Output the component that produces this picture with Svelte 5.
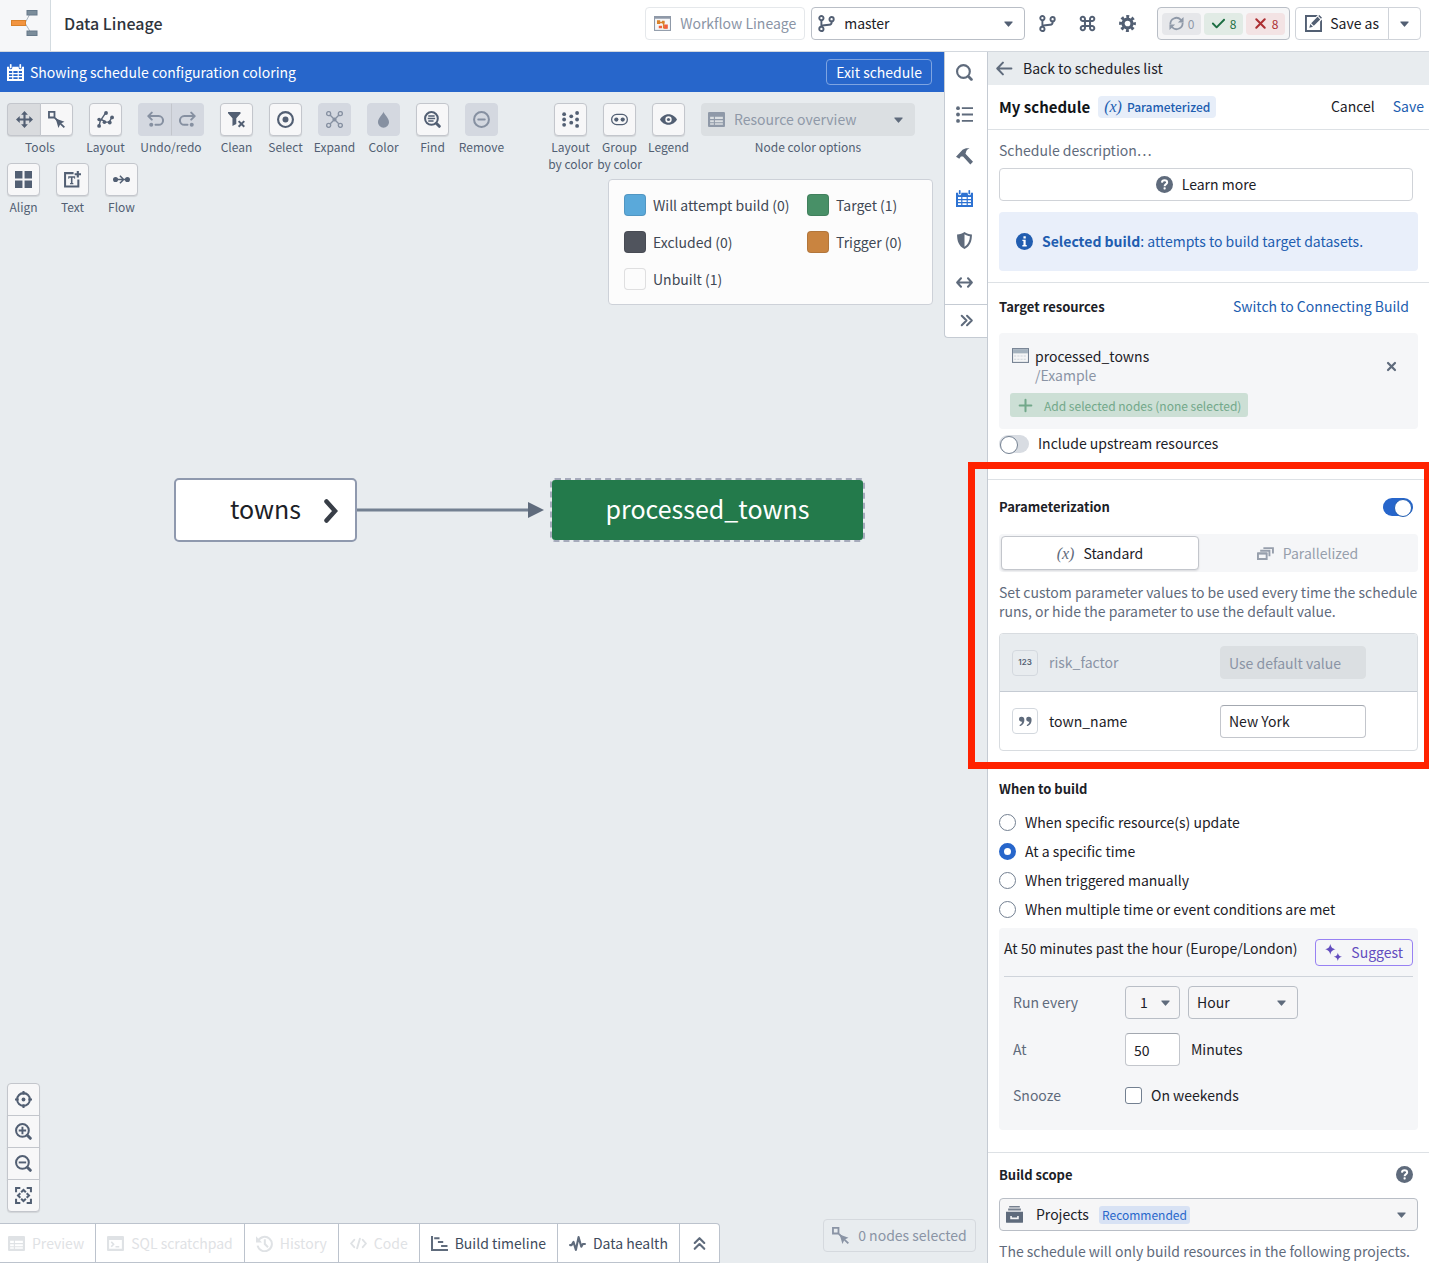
<script>
  const icons = {
    caret: `<path d="M12 6.500c0-.28-.22-.5-.5-.5h-7a.5.5 0 0 0-.37.83l3.500 4a.5.5 0 0 0 .74 0l3.500-4a.5.5 0 0 0 .13-.33z"/>`,
    branch: `<g fill="none" stroke="currentColor" stroke-width="1.8"><circle cx="3.2" cy="2.9" r="2"/><circle cx="3.2" cy="13.1" r="2"/><circle cx="12.8" cy="3.9" r="2"/><path d="M3.2 4.900V11.100M12.800 6v1c0 1.500-.8 2-2.300 2.200L6 9.700c-1.700.2-2.800.6-2.800 1.600"/></g>`,
    command: `<path fill="none" stroke="currentColor" stroke-width="1.900" d="M5.600 5.600h4.800v4.800H5.600zM5.600 5.600H3.900a2 2 0 1 1 1.700-1.900zM10.400 5.600h1.700a2 2 0 1 0-1.700-1.900zM5.600 10.400H3.900a2 2 0 1 0 1.700 1.900zM10.400 10.400h1.700a2 2 0 1 1-1.700 1.900z"/>`,
    cog: `<g fill="none" stroke="currentColor"><circle cx="8" cy="8" r="4.200" stroke-width="3"/><circle cx="8" cy="8" r="6.400" stroke-width="3" stroke-dasharray="2.700 2.327" stroke-dashoffset="1.350"/></g>`,
    refresh: `<path fill="none" stroke="currentColor" stroke-width="1.900" d="M1.500 9a6.500 6.500 0 0 1 11-5.200L14.500 6M14.500 7a6.500 6.500 0 0 1-11 5.200L1.500 10"/><path d="M15.500 1v6h-6zM.5 15V9h6z"/>`,
    tick: `<path d="M14 3c-.28 0-.53.11-.71.29L6 10.590l-3.290-3.300a1 1 0 0 0-1.420 1.420l4 4a1 1 0 0 0 1.420 0l8-8A1 1 0 0 0 14 3z"/>`,
    cross: `<path fill="none" stroke="currentColor" stroke-width="2.200" stroke-linecap="round" d="M3.500 3.500l9 9m0-9l-9 9"/>`,
    smallCross: `<path fill="none" stroke="currentColor" stroke-width="2.400" stroke-linecap="round" d="M4.300 4.300l7.400 7.400m0-7.400l-7.400 7.400"/>`,
    edit: `<path d="M0 0h12l-1.800 1.800H1.800v12.400h12.400V6L16 4.200V16H0z"/><path d="M4 12l1-3.500L7.500 11zM5.800 7.700l6-6 2.500 2.500-6 6zM12.500 1l1-1L16 2.500l-1 1z"/>`,
    calendar: `<path fill-rule="evenodd" d="M0 2.500h2V3.500a1.500 1.500 0 0 0 3 0v-1h6v1a1.500 1.500 0 0 0 3 0v-1h2V16H0zM1.900 6.500v2h3v-2zm4.100 0v2h4v-2zm5.100 0v2h3v-2zM1.900 9.600v1.800h3V9.600zm4.100 0v1.800h4V9.600zm5.100 0v1.800h3V9.600zM1.900 12.500v1.700h3v-1.700zm4.100 0v1.700h4v-1.700zm5.100 0v1.700h3v-1.700z"/><rect x="2.700" y="0" width="1.600" height="4" rx=".8"/><rect x="11.700" y="0" width="1.600" height="4" rx=".8"/>`,
    move: `<path d="M8 0l3.200 3.500H9v3.500h3.500V4.800L16 8l-3.500 3.200V9H9v3.500h2.200L8 16l-3.200-3.500H7V9H3.500v2.200L0 8l3.500-3.200V7H7V3.500H4.800z"/>`,
    selectNode: `<path fill="none" stroke="currentColor" stroke-width="1.700" d="M.9.900h5.200v5.200H.9zM5.500 5.500l4 4"/><path d="M7.200 7l8.300 3.200-3 1.400 3.500 3.300-1.200 1.100-3.400-3.400L9.800 16z"/>`,
    graph: `<path fill="none" stroke="currentColor" stroke-width="1.300" d="M2 14l1-4.500 5-7.500M3 8.500h2l3.500 2h3L14 6"/><circle cx="2" cy="14" r="1.800"/><circle cx="2" cy="8" r="1.700"/><circle cx="8.500" cy="1.900" r="1.800"/><circle cx="7" cy="10.500" r="1.700"/><circle cx="12" cy="10.800" r="1.800"/><circle cx="14.200" cy="6" r="1.800"/>`,
    undo: `<path fill="none" stroke="currentColor" stroke-width="1.900" stroke-linecap="round" stroke-linejoin="round" d="M4.500 1.500L1.200 4.800l3.300 3.300M1.700 4.800h9.300a4.100 4.100 0 0 1 0 8.200H8"/><circle cx="4" cy="13" r="1.900"/>`,
    redo: `<path fill="none" stroke="currentColor" stroke-width="1.900" stroke-linecap="round" stroke-linejoin="round" d="M11.500 1.500l3.300 3.300-3.300 3.300M14.300 4.800H5a4.100 4.100 0 0 0 0 8.200h3"/><circle cx="12" cy="13" r="1.900"/>`,
    filterRemove: `<path d="M0 1h11.500L12 2 7.800 6.800v5.400L4.200 14V6.800L0 2z"/><path fill="none" stroke="currentColor" stroke-width="1.900" d="M10 9.500l5.300 5.300m0-5.300L10 14.800"/>`,
    selection: `<circle cx="8" cy="8" r="7" fill="none" stroke="currentColor" stroke-width="2"/><circle cx="8" cy="8" r="2.800"/>`,
    expand: `<g fill="none" stroke="currentColor" stroke-width="1.300"><circle cx="2.500" cy="2.500" r="1.900"/><circle cx="13.500" cy="2.500" r="1.900"/><circle cx="2.500" cy="13.500" r="1.900"/><circle cx="13.500" cy="13.500" r="1.900"/><path d="M4 4l8 8m0-8l-8 8"/></g><circle cx="8" cy="8" r="1.900"/>`,
    tint: `<path d="M8 .5c0 2-5.200 6-5.200 10a5.200 5.200 0 0 0 10.400 0C13.200 6.500 8 2.500 8 .5z"/>`,
    searchText: `<circle cx="7" cy="7" r="6" fill="none" stroke="currentColor" stroke-width="1.900"/><path fill="none" stroke="currentColor" stroke-width="2.800" stroke-linecap="round" d="M11.800 11.800l2.600 2.600"/><path d="M4 4h6v1.400H4zM3.500 6.400h7v1.400h-7zM4 8.800h5v1.400H4z"/>`,
    remove: `<circle cx="8" cy="8" r="7" fill="none" stroke="currentColor" stroke-width="1.900"/><rect x="4" y="7" width="8" height="2" rx="1"/>`,
    layoutGrid: `<circle cx="2" cy="3" r="1.800"/><circle cx="2" cy="8" r="1.800"/><circle cx="2" cy="13" r="1.800"/><circle cx="8.700" cy="5" r="1.800"/><circle cx="8.700" cy="11" r="1.800"/><circle cx="14.200" cy="1.900" r="1.800"/><circle cx="14.200" cy="8" r="1.800"/><circle cx="14.200" cy="14" r="1.800"/>`,
    group: `<rect x=".6" y="3.200" width="14.800" height="9.600" rx="4.800" fill="none" stroke="currentColor" stroke-width="1.200"/><circle cx="5" cy="8" r="2"/><circle cx="11" cy="8" r="2"/>`,
    eye: `<path fill-rule="evenodd" d="M8 3C4.300 3 1.300 5.500 0 8c1.300 2.500 4.300 5 8 5s6.700-2.500 8-5c-1.300-2.500-4.300-5-8-5zm0 8a3 3 0 1 1 0-6 3 3 0 0 1 0 6z"/><circle cx="8" cy="8" r="1.500"/>`,
    table: `<path fill-rule="evenodd" d="M1 1h14a1 1 0 0 1 1 1v12a1 1 0 0 1-1 1H1a1 1 0 0 1-1-1V2a1 1 0 0 1 1-1zm1 4.500v2h3.500v-2zm4.500 0v2H14v-2zM2 8.600v1.900h3.500V8.600zm4.500 0v1.900H14V8.600zM2 11.500V13h3.500v-1.500zm4.500 0V13H14v-1.500z"/>`,
    search: `<circle cx="7" cy="7" r="6" fill="none" stroke="currentColor" stroke-width="2"/><path fill="none" stroke="currentColor" stroke-width="2.600" stroke-linecap="round" d="M12 12l2.500 2.500"/>`,
    list: `<circle cx="1.900" cy="2" r="1.800"/><circle cx="1.900" cy="8" r="1.800"/><circle cx="1.900" cy="14" r="1.800"/><path d="M5.500 1.100H16v1.800H5.500zM5.500 7.100H16v1.800H5.500zM5.500 13.100H16v1.800H5.500z"/>`,
    hammer: `<path d="M0 8.200L6.200 1.700C7.800.3 10.300-.2 12.800.4c-1.900.7-3 1.700-3.300 3.100l-.6 1.900 7.100 7.500-2.500 2.600-6.900-7.600-2 .2-1.500 2z"/>`,
    shield: `<path fill-rule="evenodd" d="M8 0c2 1.500 4.300 2.200 7 2.300 0 6-1.500 11-7 13.700C2.500 13.300 1 8.300 1 2.300 3.700 2.200 6 1.500 8 0zm0 2.100v11.700c3.600-2.200 4.800-5.700 5.100-9.800C11.200 3.700 9.600 3.100 8 2.100z"/>`,
    horizontal: `<path fill="none" stroke="currentColor" stroke-width="1.900" stroke-linecap="round" stroke-linejoin="round" d="M4.700 4L1.100 8l3.600 4M11.300 4l3.600 4-3.600 4M1.500 8h13"/>`,
    chevrons: `<path fill="none" stroke="currentColor" stroke-width="1.900" stroke-linecap="round" stroke-linejoin="round" d="M3.500 3.500L8 8l-4.500 4.500M8.500 3.500L13 8l-4.500 4.500"/>`,
    chevronsUp: `<path fill="none" stroke="currentColor" stroke-width="2" stroke-linecap="round" stroke-linejoin="round" d="M3.500 7.500L8 3l4.500 4.500M3.500 13L8 8.500l4.500 4.500"/>`,
    back: `<path fill="none" stroke="currentColor" stroke-width="1.900" stroke-linecap="round" stroke-linejoin="round" d="M6.500 2.500L1.200 8l5.300 5.500M1.500 8h13"/>`,
    help: `<circle cx="8" cy="8" r="8"/><path fill="none" stroke="#fff" stroke-width="1.900" d="M5.600 6.200C5.700 4.700 6.600 4 8 4s2.500.7 2.500 2c0 1.700-2.400 1.700-2.400 3.700"/><rect x="7.100" y="10.700" width="2" height="1.900" rx=".6" fill="#fff"/>`,
    info: `<circle cx="8" cy="8" r="8"/><path fill="#fff" d="M7 3h2.200v2.100H7zM6 6.300h3.100v5.100h1V12.800H6v-1.400h1V7.600H6z"/>`,
    plus: `<path fill="none" stroke="currentColor" stroke-width="1.900" stroke-linecap="round" d="M8 2.500v11M2.500 8h11"/>`,
    layers: `<path fill="none" stroke="currentColor" stroke-width="1.800" d="M.9 7.900h8.200v5.200H.9zM3 5.400h8.700v5.100M6 2.900h9v5.100"/><path d="M.5 7h9v1.900h-9z"/>`,
    quote: `<path d="M3.800 3a2.600 2.600 0 0 0-.4 5.200c.4 0 .7 0 1-.2-.1 1.700-1 2.900-2.300 3.400-.8.300-.4 1.600.6 1.400C5.300 12 6.800 9.700 6.800 6.500 6.800 4.200 5.700 3 3.800 3zM11.500 3a2.600 2.600 0 0 0-.4 5.200c.4 0 .7 0 1-.2-.1 1.700-1 2.900-2.300 3.400-.8.300-.4 1.600.6 1.400 2.600-.8 4.100-3.100 4.100-6.300C14.500 4.200 13.400 3 11.500 3z"/>`,
    sparkle: `<path d="M5 0c.9 3.300 1.800 4.200 5 5-3.200.8-4.100 1.700-5 5-.9-3.300-1.800-4.200-5-5 3.200-.8 4.100-1.700 5-5zM12.100 8.200c.7 2.600 1.300 3.200 3.900 3.900-2.600.7-3.200 1.300-3.900 3.900-.7-2.600-1.300-3.200-3.900-3.900 2.600-.7 3.200-1.300 3.900-3.900z"/>`,
    projects: `<path d="M3 0h10v1.300H3zM2 2.400h12v1.900H2z" opacity=".85"/><path fill-rule="evenodd" d="M0 5.400h16V15a.8.800 0 0 1-.8.800H.8A.8.800 0 0 1 0 15zm4 4v3h8v-3h-1.500v1.500h-5V9.400z"/>`,
    align: `<path d="M0 0h7v7H0zM9 0h7v7H9zM0 9h7v7H0zM9 9h7v7H9z"/>`,
    text: `<path fill="none" stroke="currentColor" stroke-width="1.900" d="M9 2H1v12.500h12.500V8"/><path d="M4 5h6.500v2.200H9.600V6.300H8v5h.8v1.100H5.700v-1.100h.8v-5H4.900v.9H4zM12 0h2v2h2v2h-2v2h-2V4h-2V2h2z"/>`,
    flow: `<path fill="none" stroke="currentColor" stroke-width="1.400" d="M2 8h12M6.500 4.500L10 8l-3.500 3.500"/><circle cx="2.400" cy="8" r="2.400"/><circle cx="13.600" cy="8" r="2.400"/>`,
    locate: `<circle cx="8" cy="8" r="6" fill="none" stroke="currentColor" stroke-width="1.900"/><circle cx="8" cy="8" r="1.800"/><path fill="none" stroke="currentColor" stroke-width="1.900" d="M8 0v3.500M8 12.500V16M0 8h3.500M12.500 8H16"/>`,
    zoomIn: `<circle cx="7" cy="7" r="6" fill="none" stroke="currentColor" stroke-width="1.900"/><path fill="none" stroke="currentColor" stroke-width="2.800" stroke-linecap="round" d="M11.800 11.800l2.600 2.600"/><path fill="none" stroke="currentColor" stroke-width="1.800" d="M7 3.500v7M3.500 7h7"/>`,
    zoomOut: `<circle cx="7" cy="7" r="6" fill="none" stroke="currentColor" stroke-width="1.900"/><path fill="none" stroke="currentColor" stroke-width="2.800" stroke-linecap="round" d="M11.800 11.800l2.600 2.600"/><path fill="none" stroke="currentColor" stroke-width="1.800" d="M3.500 7h7"/>`,
    zoomFit: `<g fill="none" stroke="currentColor" stroke-width="1.900"><path d="M5 1H1v4M11 1h4v4M5 15H1v-4M11 15h4v-4"/><path d="M5.800 5L8 2.800 10.200 5M5.800 11L8 13.200 10.200 11M5 5.800L2.800 8 5 10.200M11 5.800L13.200 8 11 10.200"/></g>`,
    console: `<path fill-rule="evenodd" d="M1 1h14a1 1 0 0 1 1 1v12a1 1 0 0 1-1 1H1a1 1 0 0 1-1-1V2a1 1 0 0 1 1-1zm1 3.700V13h12V4.700z"/><path fill="none" stroke="currentColor" stroke-width="1.500" d="M4 6.500L6.200 8.700 4 11M8 11h3.500"/>`,
    history: `<path fill="none" stroke="currentColor" stroke-width="1.900" d="M2 5.500A6.800 6.800 0 1 1 1.500 10M8.300 4v4.500l3 3"/><path d="M0 1.200V7h5.700z"/>`,
    code: `<path fill="none" stroke="currentColor" stroke-width="1.800" stroke-linecap="round" stroke-linejoin="round" d="M4 4.500L1 8l3 3.500M12 4.500L15 8l-3 3.500M9.300 3.500l-2.600 9"/>`,
    timeline: `<path d="M0 1h1.900v12.200H16V15H0zM3 2h5v1.900H3zM6.500 5.700h5v1.900h-5zM9.500 9.400h6v1.900h-6z"/>`,
    pulse: `<path fill="none" stroke="currentColor" stroke-width="2" stroke-linecap="round" stroke-linejoin="round" d="M1 9.500h1.500L4.200 6.500 6.500 14 9 2l2.600 9 1.400-2.500h2"/>`,
    app: `<rect x=".5" y="1.500" width="15" height="13" fill="#f6f7f9" stroke="#8f99a8"/><path fill="#8f99a8" d="M0 1h16v2.500H0z"/><path fill="none" stroke="#d9822b" stroke-width="1.300" d="M4 7h5v5h3"/><path fill="#d9822b" d="M2.800 5h3v3.500h-3zM7.500 5.500h2.500V8H7.500z"/><path fill="#f0603f" d="M4.500 10h3v2.500h-3zM9.500 9h3.500v4H9.500z"/>`,
    dataset: `<rect x=".5" y="1.500" width="15" height="13" fill="#f4f5f6" stroke="#738091"/><path fill="#a3b1bd" d="M1 2h14v4H1z"/><path stroke="#cdd3d9" stroke-dasharray="2 1" fill="none" d="M2 8.500h12M2 11.500h12"/>`,
  };

  const tools = [
    { label: "Tools", icons: ["move", "selectNode"], active: "move" },
    { label: "Layout", icons: ["graph"] },
    { label: "Undo/redo", icons: ["undo", "redo"], disabled: true },
    { label: "Clean", icons: ["filterRemove"] },
    { label: "Select", icons: ["selection"] },
    { label: "Expand", icons: ["expand"], disabled: true },
    { label: "Color", icons: ["tint"], disabled: true },
    { label: "Find", icons: ["searchText"] },
    { label: "Remove", icons: ["remove"], disabled: true },
    { label: "Align", icons: ["align"] },
    { label: "Text", icons: ["text"] },
    { label: "Flow", icons: ["flow"] },
  ];

  const colorTools = [
    { label: "Layout\nby color", icons: ["layoutGrid"] },
    { label: "Group\nby color", icons: ["group"] },
    { label: "Legend", icons: ["eye"] },
  ];

  const legend = [
    { label: "Will attempt build (0)", color: "#5aa9da" },
    { label: "Target (1)", color: "#489067" },
    { label: "Excluded (0)", color: "#50545d" },
    { label: "Trigger (0)", color: "#c98440" },
    { label: "Unbuilt (1)", color: "#fcfcfc" },
  ];

  const rail = ["search", "list", "hammer", "calendar", "shield", "horizontal"];
  const zoomTools = ["locate", "zoomIn", "zoomOut", "zoomFit"];

  const tabs = [
    { label: "Preview", icon: "table", disabled: true },
    { label: "SQL scratchpad", icon: "console", disabled: true },
    { label: "History", icon: "history", disabled: true },
    { label: "Code", icon: "code", disabled: true },
    { label: "Build timeline", icon: "timeline" },
    { label: "Data health", icon: "pulse" },
  ];

  const triggers = [
    "When specific resource(s) update",
    "At a specific time",
    "When triggered manually",
    "When multiple time or event conditions are met",
  ];

  let trigger = $state("At a specific time");
  let upstream = $state(false);
  let parameterized = $state(true);
  let townName = $state("New York");
  let minutes = $state("50");
  let weekends = $state(false);
</script>

{#snippet icon(name)}
  <svg class="icon" viewBox="0 0 16 16" fill="currentColor" aria-hidden="true">
    {@html icons[name]}
  </svg>
{/snippet}

{#snippet tool(item)}
  <div class="tool">
    <div class="tool-buttons">
      {#each item.icons as name}
        <button
          class="btn square"
          class:active={item.active === name}
          disabled={item.disabled}
          aria-label={name}
        >
          {@render icon(name)}
        </button>
      {/each}
    </div>
    <span class="tool-label">{item.label}</span>
  </div>
{/snippet}

<div class="app">
  <header>
    <div class="logo">
      <svg width="28" height="28" viewBox="0 0 28 28" aria-hidden="true">
        <path d="M14 14L20 3M14 14l6 10" stroke="#a9b4bf" fill="none" />
        <rect x=".5" y="11.500" width="14" height="5" fill="#f29440" stroke="#d9822b" />
        <rect x="16" y="1.500" width="10" height="4.500" fill="#7b8d9b" stroke="#66798a" />
        <rect x="16" y="22" width="10" height="4.500" fill="#7b8d9b" stroke="#66798a" />
      </svg>
    </div>
    <h1>Data Lineage</h1>
    <button class="btn workflow" disabled>{@render icon("app")}Workflow Lineage</button>
    <div class="select branch-select">
      <span class="lead">{@render icon("branch")}</span>
      <select aria-label="Branch"><option>master</option></select>
      <span class="caret">{@render icon("caret")}</span>
    </div>
    <div class="header-icons">
      <button class="bare" aria-label="Branches">{@render icon("branch")}</button>
      <button class="bare" aria-label="Shortcuts">{@render icon("command")}</button>
      <button class="bare" aria-label="Settings">{@render icon("cog")}</button>
    </div>
    <button class="btn status" aria-label="Build status">
      <span class="count pending">{@render icon("refresh")}0</span>
      <span class="count passed">{@render icon("tick")}8</span>
      <span class="count failed">{@render icon("cross")}8</span>
    </button>
    <div class="save-as">
      <button class="btn">{@render icon("edit")}Save as</button>
      <button class="btn more" aria-label="More save options">{@render icon("caret")}</button>
    </div>
  </header>

  <div class="body">
    <main>
      <div class="top">
        <div class="top-main">
          <div class="banner">
            {@render icon("calendar")}
            <span>Showing schedule configuration coloring</span>
            <button>Exit schedule</button>
          </div>
          <div class="toolbars">
            <div class="tools">
              {#each tools as item}
                {@render tool(item)}
              {/each}
            </div>
            <div class="color-side">
              <div class="color-tools">
                {#each colorTools as item}
                  {@render tool(item)}
                {/each}
                <div class="tool">
                  <div class="select overview">
                    <span class="lead">{@render icon("table")}</span>
                    <select id="node-color" disabled><option>Resource overview</option></select>
                    <span class="caret">{@render icon("caret")}</span>
                  </div>
                  <label class="tool-label" for="node-color">Node color options</label>
                </div>
              </div>
              <div class="legend">
                {#each legend as entry}
                  <div class="legend-entry">
                    <span class="swatch" style="background-color: {entry.color}"></span>
                    {entry.label}
                  </div>
                {/each}
              </div>
            </div>
          </div>
        </div>
        <nav class="rail">
          {#each rail as name}
            <button class="bare" class:current={name === "calendar"} aria-label={name}>
              {@render icon(name)}
            </button>
          {/each}
          <button class="bare collapse" aria-label="Collapse">{@render icon("chevrons")}</button>
        </nav>
      </div>

      <div class="graph">
        <div class="node towns">
          towns
          <svg width="14" height="24" viewBox="0 0 14 24" aria-hidden="true">
            <path d="M2.500 2.500L11 12l-8.500 9.500" fill="none" stroke="#383e47" stroke-width="4.500" stroke-linecap="round" />
          </svg>
        </div>
        <svg class="edge" width="188" height="18" viewBox="0 0 188 18" aria-hidden="true">
          <path d="M0 9h172" stroke="#738091" stroke-width="3" />
          <path d="M171 1l16 8-16 8z" fill="#5f6b7c" />
        </svg>
        <div class="node processed">processed_towns</div>
        <div class="zoom">
          {#each zoomTools as name}
            <button class="btn square" aria-label={name}>{@render icon(name)}</button>
          {/each}
        </div>
      </div>

      <footer>
        <div class="tabs">
          {#each tabs as tab}
            <button disabled={tab.disabled}>{@render icon(tab.icon)}{tab.label}</button>
          {/each}
          <button class="expand-tabs" aria-label="Expand">{@render icon("chevronsUp")}</button>
        </div>
        <button class="btn selected-count" disabled>
          {@render icon("selectNode")}0 nodes selected
        </button>
      </footer>
    </main>

    <aside>
      <button class="back">{@render icon("back")}Back to schedules list</button>

      <div class="title-row">
        <h2>My schedule</h2>
        <span class="tag"><i class="var">(x)</i>Parameterized</span>
        <button class="link cancel">Cancel</button>
        <button class="link">Save</button>
      </div>

      <section class="intro">
        <p class="muted">Schedule description…</p>
        <button class="btn learn">{@render icon("help")}Learn more</button>
        <div class="callout">
          {@render icon("info")}
          <span><strong>Selected build</strong>: attempts to build target datasets.</span>
        </div>
      </section>

      <section class="targets">
        <div class="section-head">
          <h3>Target resources</h3>
          <a href="#connecting">Switch to Connecting Build</a>
        </div>
        <div class="resource">
          <div class="resource-row">
            {@render icon("dataset")}
            <div class="resource-name">
              <div>processed_towns</div>
              <div class="path">/Example</div>
            </div>
            <button class="bare" aria-label="Remove target">{@render icon("smallCross")}</button>
          </div>
          <button class="add" disabled>{@render icon("plus")}Add selected nodes (none selected)</button>
        </div>
        <label class="upstream">
          <input class="switch" type="checkbox" bind:checked={upstream} />
          Include upstream resources
        </label>
      </section>

      <section class="params">
        <div class="section-head">
          <h3 id="param-title">Parameterization</h3>
          <input class="switch" type="checkbox" aria-labelledby="param-title" bind:checked={parameterized} />
        </div>
        <div class="segments">
          <button class="btn"><i class="var">(x)</i>Standard</button>
          <button class="off">{@render icon("layers")}Parallelized</button>
        </div>
        <p class="muted">
          Set custom parameter values to be used every time the schedule runs, or hide the parameter
          to use the default value.
        </p>
        <div class="param-list">
          <div class="param hidden-param">
            <span class="type num">123</span>
            <label for="risk">risk_factor</label>
            <input id="risk" type="text" value="Use default value" disabled />
          </div>
          <div class="param">
            <span class="type">{@render icon("quote")}</span>
            <label for="town">town_name</label>
            <input id="town" type="text" bind:value={townName} />
          </div>
        </div>
        <div class="highlight"></div>
      </section>

      <section class="when">
        <h3>When to build</h3>
        <div class="radios">
          {#each triggers as option}
            <label>
              <input type="radio" name="trigger" value={option} bind:group={trigger} />
              {option}
            </label>
          {/each}
        </div>
        <div class="timing">
          <div class="timing-head">
            <span>At 50 minutes past the hour (Europe/London)</span>
            <button class="suggest">{@render icon("sparkle")}Suggest</button>
          </div>
          <div class="field">
            <label for="every">Run every</label>
            <div class="select count-select">
              <select id="every"><option>1</option></select>
              <span class="caret">{@render icon("caret")}</span>
            </div>
            <div class="select unit-select">
              <select aria-label="Unit"><option>Hour</option></select>
              <span class="caret">{@render icon("caret")}</span>
            </div>
          </div>
          <div class="field">
            <label for="minutes">At</label>
            <input id="minutes" type="text" bind:value={minutes} />
            <span class="unit">Minutes</span>
          </div>
          <div class="field">
            <span class="field-name">Snooze</span>
            <label class="check">
              <input type="checkbox" bind:checked={weekends} />
              On weekends
            </label>
          </div>
        </div>
      </section>

      <section class="scope">
        <div class="section-head">
          <h3>Build scope</h3>
          {@render icon("help")}
        </div>
        <div class="select scope-select">
          <span class="lead">{@render icon("projects")}</span>
          <select aria-label="Build scope"><option>Projects</option></select>
          <span class="recommended">Recommended</span>
          <span class="caret">{@render icon("caret")}</span>
        </div>
        <p class="muted">The schedule will only build resources in the following projects.</p>
      </section>
    </aside>
  </div>
</div>

<style>
  :global(body) {
    margin: 0;
  }

  .app {
    display: flex;
    flex-direction: column;
    height: 100vh;
    overflow: hidden;
    font-family: "Noto Sans CJK SC", "Noto Sans", sans-serif;
    font-size: 14px;
    line-height: 19px;
    color: #1c2127;
    background: #e8ecef;
  }

  .app * {
    box-sizing: border-box;
  }

  h1,
  h2,
  h3,
  p {
    margin: 0;
  }

  button,
  input,
  select {
    font: inherit;
    color: inherit;
    margin: 0;
  }

  button {
    display: flex;
    align-items: center;
    justify-content: center;
    padding: 0;
    border: none;
    background: none;
    white-space: nowrap;
  }

  .icon {
    width: 17px;
    height: 17px;
    flex: none;
    display: block;
    color: #5f6b7c;
  }

  .btn {
    height: 33px;
    border: 1px solid #c3c6cc;
    border-radius: 4px;
    background: #f6f7f9;
  }

  .square {
    width: 33px;
    background: #f7f7f8;
    box-shadow: 0 1px 1px rgba(17, 20, 24, 0.1);
  }

  .square .icon {
    color: #525f73;
  }

  .square:disabled {
    border-color: #d4d8e0;
    background: #d4d8e0;
    box-shadow: none;
  }

  .square:disabled .icon {
    color: #8690a1;
  }

  .square.active {
    background: #d9dbde;
  }

  /* Header */
  header {
    display: flex;
    align-items: center;
    gap: 6px;
    height: 52px;
    flex: none;
    padding-right: 8px;
    padding-bottom: 4px;
    background: #fff;
    border-bottom: 1px solid #d3d8de;
  }

  header .icon {
    color: #525f73;
  }

  .logo {
    display: flex;
    align-items: center;
    justify-content: center;
    width: 51px;
    height: 51px;
    margin-bottom: -4px;
    padding-bottom: 5px;
    background: #f6f7f9;
    border-right: 1px solid #d3dbe0;
  }

  h1 {
    flex: 1;
    padding-left: 7px;
    font-size: 16px;
    font-weight: 500;
    color: #2f343c;
  }

  .workflow {
    gap: 9px;
    width: 160px;
    background: #fff;
    border-color: #e5e8eb;
    color: #8a94a5;
  }

  .select {
    position: relative;
  }

  .select select {
    width: 100%;
    height: 33px;
    padding: 0 8px;
    appearance: none;
    border: 1px solid #b9bec6;
    border-radius: 4px;
    background: #f6f6f7;
    opacity: 1;
  }

  .select .lead,
  .select .caret {
    position: absolute;
    top: 8px;
    left: 7px;
    pointer-events: none;
  }

  .select .caret {
    left: auto;
    right: 8px;
  }

  .branch-select {
    width: 214px;
  }

  .branch-select select {
    padding-left: 32px;
    background: #fff;
  }

  .header-icons {
    display: flex;
    margin: 0 4px 0 -4px;
  }

  .header-icons button {
    width: 40px;
    height: 33px;
  }

  .status {
    gap: 3px;
    width: 133px;
    margin-right: -1px;
    background: #f6f6f7;
    border-color: #b9bec6;
  }

  .count {
    display: flex;
    align-items: center;
    justify-content: center;
    gap: 4px;
    width: 39px;
    height: 22px;
    border-radius: 4px;
    font-size: 12px;
  }

  .count .icon {
    width: 15px;
    height: 15px;
    color: inherit;
  }

  .pending {
    background: #e6e7ea;
    color: #8f99a8;
  }

  .passed {
    background: #e1ebe5;
    color: #1c6e42;
  }

  .failed {
    background: #f3e3e4;
    color: #ac2f33;
  }

  .save-as {
    display: flex;
  }

  .save-as .btn {
    gap: 8px;
    padding: 0 9px;
    background: #fff;
    border-radius: 4px 0 0 4px;
    border-color: #cfd3d9;
  }

  .save-as .more {
    width: 33px;
    padding: 0;
    margin-left: -1px;
    border-radius: 0 4px 4px 0;
  }

  .body {
    display: flex;
    flex: 1;
    min-height: 0;
  }

  main {
    display: flex;
    flex-direction: column;
    flex: 1;
    min-width: 0;
  }

  .top {
    display: flex;
    align-items: flex-start;
  }

  .top-main {
    flex: 1;
    min-width: 0;
  }

  .banner {
    display: flex;
    align-items: center;
    gap: 6px;
    height: 40px;
    padding: 0 12px 0 7px;
    background: #2766cb;
    color: #fff;
  }

  .banner .icon {
    color: #fff;
  }

  .banner span {
    flex: 1;
  }

  .banner button {
    height: 26px;
    padding: 0 9px;
    border: 1px solid #7ea4e1;
    border-radius: 4px;
  }

  .toolbars {
    display: flex;
    padding: 11px 11px 0 7px;
  }

  .tools {
    display: flex;
    flex-wrap: wrap;
    align-content: flex-start;
    gap: 8px 16px;
    flex: 1;
  }

  .tool {
    display: flex;
    flex-direction: column;
    align-items: center;
    gap: 2px;
  }

  .tool-buttons {
    display: flex;
  }

  .tool-buttons .btn:not(:first-child) {
    border-radius: 0 4px 4px 0;
    border-left-color: #c3c6cc;
  }

  .tool-buttons .btn:not(:last-child) {
    border-radius: 4px 0 0 4px;
    border-right: none;
  }

  .tool-label {
    width: 0;
    display: flex;
    justify-content: center;
    font-size: 12px;
    line-height: 17px;
    color: #525f73;
    white-space: pre;
    text-align: center;
  }

  .color-side {
    display: flex;
    flex-direction: column;
    align-items: flex-end;
    gap: 7px;
    margin-left: 12px;
  }

  .color-tools {
    display: flex;
    gap: 16px;
    padding-right: 18px;
  }

  .overview {
    width: 214px;
  }

  .overview select {
    padding-left: 32px;
    border-color: #dbdfe2;
    background: #dbdfe2;
    color: #8f99a8;
  }

  .overview .lead .icon {
    color: #8f99a8;
  }

  .legend {
    display: grid;
    grid-template-columns: 183px auto;
    gap: 15px 0;
    width: 325px;
    padding: 14px 15px;
    background: #fcfcfc;
    border: 1px solid #cdd1d8;
    border-radius: 4px;
    color: #404854;
  }

  .legend-entry {
    display: flex;
    align-items: center;
    gap: 7px;
    white-space: nowrap;
  }

  .swatch {
    width: 22px;
    height: 22px;
    border: 1px solid rgba(17, 20, 24, 0.12);
    border-radius: 4px;
  }

  .rail {
    display: flex;
    flex-direction: column;
    width: 43px;
    background: #fff;
    border: 1px solid #c5cbd3;
    border-width: 0 0 1px 1px;
    border-radius: 0 0 0 4px;
  }

  .rail button {
    height: 42px;
    padding-right: 3px;
    padding-bottom: 1px;
  }

  .rail .current .icon {
    color: #2d72d2;
  }

  .rail .collapse {
    height: 33px;
    padding-right: 0;
    border-top: 1px solid #c5cbd3;
  }

  /* Graph canvas */
  .graph {
    position: relative;
    flex: 1;
  }

  .node {
    position: absolute;
    top: 140px;
    display: flex;
    align-items: center;
    justify-content: center;
    height: 64px;
    border-radius: 5px;
    font-size: 25px;
    line-height: 36px;
    padding-bottom: 5px;
  }

  .towns {
    left: 174px;
    width: 183px;
    background: #fff;
    border: 2px solid #8f99ae;
  }

  .towns svg {
    position: absolute;
    right: 17px;
    top: 19px;
  }

  .edge {
    position: absolute;
    left: 357px;
    top: 163px;
  }

  .processed {
    left: 550px;
    width: 315px;
    background: #237a4b;
    background-clip: padding-box;
    border: 2px dashed #a5aabb;
    color: #fff;
  }

  .zoom {
    position: absolute;
    left: 7px;
    bottom: 11px;
    display: flex;
    flex-direction: column;
  }

  .zoom .btn {
    border-radius: 0;
  }

  .zoom .btn:not(:first-child) {
    margin-top: -1px;
  }

  .zoom .btn:first-child {
    border-radius: 4px 4px 0 0;
  }

  .zoom .btn:last-child {
    border-radius: 0 0 4px 4px;
  }

  footer {
    display: flex;
    justify-content: space-between;
    align-items: flex-end;
    height: 40px;
    padding-right: 11px;
  }

  .tabs {
    display: flex;
    height: 40px;
    background: #fff;
    border: 1px solid #bcc3cd;
    border-left: none;
    border-radius: 0 4px 0 0;
  }

  .tabs button {
    gap: 7px;
    padding: 0 11px;
    color: #404b5c;
  }

  .tabs button:not(:last-child) {
    border-right: 1px solid #bcc3cd;
  }

  .tabs button:first-child {
    padding-left: 8px;
  }

  .tabs button:disabled,
  .tabs button:disabled .icon {
    color: #dfe2e5;
  }

  .selected-count {
    gap: 9px;
    width: 153px;
    margin-bottom: 11px;
    background: none;
    border-color: #d5d9de;
    color: #8a94a5;
  }

  .selected-count .icon {
    color: #8a94a5;
  }

  /* Schedule panel */
  aside {
    display: flex;
    flex-direction: column;
    flex: 0 0 442px;
    background: #fff;
    border-left: 1px solid #c5cbd3;
  }

  .back {
    justify-content: flex-start;
    gap: 10px;
    flex: none;
    height: 33px;
    padding: 0 8px;
    background: #e8ecef;
  }

  .title-row {
    display: flex;
    align-items: center;
    gap: 8px;
    flex: none;
    height: 45px;
    padding: 0 5px 1px 11px;
    border-bottom: 1px solid #dde1e5;
  }

  h2 {
    font-size: 15px;
    font-weight: 700;
    color: #111418;
  }

  h3 {
    font-size: 13px;
    font-weight: 700;
  }

  .tag {
    display: flex;
    align-items: center;
    gap: 5px;
    height: 22px;
    padding: 0 6px;
    border-radius: 4px;
    background: #e7eef9;
    color: #215db0;
    font-size: 12px;
    font-weight: 500;
  }

  .var {
    font-family: "Liberation Serif", serif;
    font-size: 16px;
    font-weight: 400;
  }

  .link {
    color: #215db0;
  }

  .cancel {
    margin-left: auto;
    margin-right: 10px;
    color: #1c2127;
  }

  a {
    color: #215db0;
    text-decoration: none;
  }

  .muted {
    color: #5f6b7c;
  }

  section {
    flex: none;
    padding: 0 11px;
    border-bottom: 1px solid #dde1e5;
  }

  .intro {
    padding-top: 11px;
    padding-bottom: 11px;
  }

  .learn {
    gap: 9px;
    width: calc(100% - 5px);
    margin-top: 8px;
    background: #fff;
    border-color: #d0d3d8;
  }

  .callout {
    display: flex;
    align-items: center;
    gap: 9px;
    height: 59px;
    margin-top: 11px;
    padding: 0 17px;
    border-radius: 4px;
    background: #e9effa;
    color: #215db0;
  }

  .callout .icon {
    color: #215db0;
  }

  .section-head {
    display: flex;
    align-items: center;
    justify-content: space-between;
    height: 19px;
  }

  .targets {
    padding-top: 14px;
    padding-bottom: 26px;
  }

  .targets a {
    margin-right: 9px;
  }

  .resource {
    height: 96px;
    margin-top: 17px;
    padding: 14px 11px;
    border-radius: 4px;
    background: #f5f6f8;
  }

  .resource-row {
    display: flex;
    gap: 6px;
    padding-left: 2px;
  }

  .resource-name {
    flex: 1;
  }

  .path {
    color: #8a94a5;
  }

  .resource-row button {
    width: 31px;
  }

  .resource-row button .icon {
    width: 15px;
    height: 15px;
  }

  .add {
    gap: 10px;
    height: 24px;
    margin-top: 8px;
    padding: 0 7px;
    border-radius: 3px;
    background: #ccdfd5;
    color: #72a88a;
    font-size: 12px;
  }

  .add .icon {
    color: #72a88a;
  }

  .upstream {
    display: flex;
    align-items: center;
    gap: 9px;
    margin-top: 5px;
  }

  .switch {
    appearance: none;
    display: flex;
    width: 30px;
    height: 18px;
    border-radius: 9px;
    background: #d8dce2;
  }

  .switch::before {
    content: "";
    width: 16px;
    height: 16px;
    margin: 1px;
    border: 1px solid #738091;
    border-radius: 50%;
    background: #fff;
  }

  .switch:checked {
    justify-content: flex-end;
    background: #2766cb;
  }

  .switch:checked::before {
    border-color: #215db0;
  }

  .params {
    position: relative;
    padding-top: 17px;
    padding-bottom: 28px;
    border-bottom: none;
  }

  .params .switch {
    margin-right: 5px;
  }

  .segments {
    display: flex;
    height: 38px;
    margin: 18px 0 11px;
    padding: 2px;
    border-radius: 4px;
    background: #f5f6f8;
  }

  .segments button {
    gap: 9px;
    flex: 1;
    height: 34px;
  }

  .segments .btn {
    flex: 0 0 198px;
    background: #fff;
    box-shadow: 0 1px 2px rgba(17, 20, 24, 0.12);
  }

  .segments .var {
    color: #5f6b7c;
  }

  .segments .off,
  .segments .off .icon {
    color: #979fac;
  }

  .param-list {
    margin-top: 12px;
    border: 1px solid #d8dce0;
    border-radius: 4px;
    overflow: hidden;
  }

  .param {
    display: flex;
    align-items: center;
    gap: 11px;
    height: 58px;
    padding: 0 51px 0 12px;
  }

  .param label {
    flex: 1;
  }

  .hidden-param {
    background: #e8ecef;
    border-bottom: 1px solid #c5cbd3;
    color: #8a94a5;
  }

  .type {
    display: flex;
    align-items: center;
    justify-content: center;
    width: 26px;
    height: 26px;
    border: 1px solid #d3d8de;
    border-radius: 4px;
    color: #525f73;
  }

  .type .icon {
    width: 15px;
    height: 15px;
  }

  .num {
    font-family: Inter, sans-serif;
    font-size: 8px;
    font-weight: 600;
  }

  input[type="text"] {
    width: 146px;
    height: 33px;
    padding: 0 8px;
    border: 1px solid #c3c6cc;
    border-top-color: #a3a8b0;
    border-radius: 4px;
    background: #fff;
  }

  input[type="text"]:disabled {
    border-color: #dbdfe2;
    background: #dbdfe2;
    color: #8a94a5;
  }

  /* Red frame drawn round the section, over the panel edges */
  .highlight {
    position: absolute;
    top: -18px;
    right: -2px;
    bottom: 10px;
    left: -20px;
    border: 7px solid #ff2200;
    pointer-events: none;
  }

  .when {
    padding-bottom: 22px;
  }

  .radios {
    display: flex;
    flex-direction: column;
    gap: 10px;
    margin: 15px 0 9px;
  }

  .radios label,
  .check {
    display: flex;
    align-items: center;
    gap: 9px;
  }

  input[type="radio"] {
    appearance: none;
    width: 17px;
    height: 17px;
    border: 1px solid #738091;
    border-radius: 50%;
    background: #fff;
  }

  input[type="radio"]:checked {
    border: 5px solid #2766cb;
  }

  .timing {
    padding: 11px 5px 19px;
    border-radius: 4px;
    background: #f5f6f8;
  }

  .timing-head {
    display: flex;
    align-items: flex-start;
    justify-content: space-between;
    height: 38px;
    margin-bottom: 9px;
    border-bottom: 1px solid #cfd4db;
  }

  .suggest {
    gap: 9px;
    height: 27px;
    padding: 0 9px;
    border: 1px solid #9881f3;
    border-radius: 4px;
    color: #634dbf;
  }

  .suggest .icon {
    color: #634dbf;
  }

  .field {
    display: flex;
    align-items: center;
    height: 33px;
    margin-bottom: 14px;
    padding-left: 9px;
    gap: 8px;
  }

  .field:last-child {
    margin-bottom: 0;
    height: 31px;
  }

  .field > label:first-child,
  .field-name {
    width: 104px;
    color: #5f6b7c;
  }

  .count-select,
  .field #minutes {
    width: 55px;
  }

  .count-select select {
    padding-left: 14px;
  }

  .count-select .caret {
    right: 6px;
  }

  .unit-select {
    width: 110px;
  }

  .unit {
    padding-left: 3px;
  }

  .check input {
    appearance: none;
    width: 17px;
    height: 17px;
    border: 1px solid #738091;
    border-radius: 3px;
    background: #fff;
  }

  .scope {
    padding-top: 12px;
    border-bottom: none;
  }

  .scope .section-head {
    padding-right: 5px;
  }

  .scope-select {
    margin: 14px 0 11px;
  }

  .scope-select select {
    padding-left: 36px;
  }

  .recommended {
    position: absolute;
    top: 8px;
    left: 100px;
    padding: 0 3px;
    border-radius: 3px;
    background: #d8e2f4;
    color: #2766cb;
    font-size: 12px;
    line-height: 18px;
    pointer-events: none;
  }
</style>
